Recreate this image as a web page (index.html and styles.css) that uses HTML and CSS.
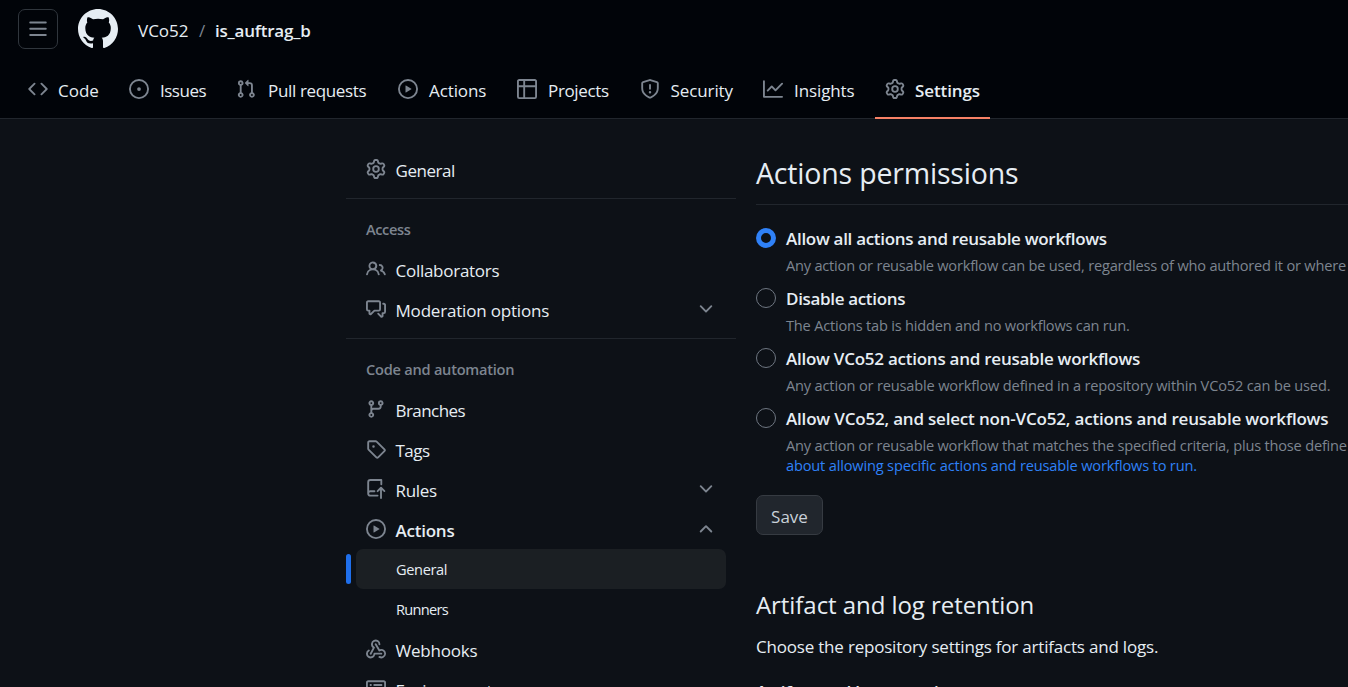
FILE: index.html
```html
<!DOCTYPE html>
<html lang="en">
<head>
<meta charset="utf-8">
<title>Actions settings</title>
<link rel="stylesheet" href="styles.css">
</head>
<body>
<svg class="sprite" aria-hidden="true">
  <symbol id="i-gear" viewBox="0 0 16 16"><path d="M8 0a8.2 8.2 0 0 1 .701.031C9.444.095 9.99.645 10.16 1.29l.288 1.107c.018.066.079.158.212.224.231.114.454.243.668.386.123.082.233.09.299.071l1.103-.303c.644-.176 1.392.021 1.82.63.27.385.506.792.704 1.218.315.675.111 1.422-.364 1.891l-.814.806c-.049.048-.098.147-.088.294.016.257.016.515 0 .772-.01.147.038.246.088.294l.814.806c.475.469.679 1.216.364 1.891a7.977 7.977 0 0 1-.704 1.217c-.428.61-1.176.807-1.82.63l-1.102-.302c-.067-.019-.177-.011-.3.071a5.909 5.909 0 0 1-.668.386c-.133.066-.194.158-.211.224l-.29 1.106c-.168.646-.715 1.196-1.458 1.26a8.006 8.006 0 0 1-1.402 0c-.743-.064-1.289-.614-1.458-1.26l-.289-1.106c-.018-.066-.079-.158-.212-.224a5.738 5.738 0 0 1-.668-.386c-.123-.082-.233-.09-.299-.071l-1.103.303c-.644.176-1.392-.021-1.82-.63a8.12 8.12 0 0 1-.704-1.218c-.315-.675-.111-1.422.363-1.891l.815-.806c.05-.048.098-.147.088-.294a6.214 6.214 0 0 1 0-.772c.01-.147-.038-.246-.088-.294l-.815-.806C.635 6.045.431 5.298.746 4.623a7.92 7.92 0 0 1 .704-1.217c.428-.61 1.176-.807 1.82-.63l1.102.302c.067.019.177.011.3-.071.214-.143.437-.272.668-.386.133-.066.194-.158.211-.224l.29-1.106C6.009.645 6.556.095 7.299.03 7.53.01 7.764 0 8 0Zm-.571 1.525c-.036.003-.108.036-.137.146l-.289 1.105c-.147.561-.549.967-.998 1.189-.173.086-.34.183-.5.29-.417.278-.97.423-1.529.27l-1.103-.303c-.109-.03-.175.016-.195.045-.22.312-.412.644-.573.99-.014.031-.021.11.059.19l.815.806c.411.406.562.957.53 1.456a4.709 4.709 0 0 0 0 .582c.032.499-.119 1.05-.53 1.456l-.815.806c-.081.08-.073.159-.059.19.162.346.353.677.573.989.02.03.085.076.195.046l1.102-.303c.56-.153 1.113-.008 1.53.27.161.107.328.204.501.29.447.222.85.629.997 1.189l.289 1.105c.029.109.101.143.137.146a6.6 6.6 0 0 0 1.142 0c.036-.003.108-.036.137-.146l.289-1.105c.147-.561.549-.967.998-1.189.173-.086.34-.183.5-.29.417-.278.97-.423 1.529-.27l1.103.303c.109.029.175-.016.195-.045.22-.313.411-.644.573-.99.014-.031.021-.11-.059-.19l-.815-.806c-.411-.406-.562-.957-.53-1.456a4.709 4.709 0 0 0 0-.582c-.032-.499.119-1.05.53-1.456l.815-.806c.081-.08.073-.159.059-.19a6.464 6.464 0 0 0-.573-.989c-.02-.03-.085-.076-.195-.046l-1.102.303c-.56.153-1.113.008-1.53-.27a4.44 4.44 0 0 0-.501-.29c-.447-.222-.85-.629-.997-1.189l-.289-1.105c-.029-.11-.101-.143-.137-.146a6.6 6.6 0 0 0-1.142 0ZM11 8a3 3 0 1 1-6 0 3 3 0 0 1 6 0ZM9.5 8a1.5 1.5 0 1 0-3.001.001A1.5 1.5 0 0 0 9.5 8Z"/></symbol>
  <symbol id="i-play" viewBox="0 0 16 16"><path d="M8 0a8 8 0 1 1 0 16A8 8 0 0 1 8 0ZM1.5 8a6.5 6.5 0 1 0 13 0 6.5 6.5 0 0 0-13 0Zm4.879-2.773 4.264 2.559a.25.25 0 0 1 0 .428l-4.264 2.559A.25.25 0 0 1 6 10.559V5.442a.25.25 0 0 1 .379-.215Z"/></symbol>
  <symbol id="i-down" viewBox="0 0 16 16"><path d="M12.78 5.22a.749.749 0 0 1 0 1.06l-4.25 4.25a.749.749 0 0 1-1.06 0L3.22 6.28a.749.749 0 1 1 1.06-1.06L8 8.939l3.72-3.719a.749.749 0 0 1 1.06 0Z"/></symbol>
  <symbol id="i-up" viewBox="0 0 16 16"><path d="M3.22 10.53a.749.749 0 0 1 0-1.06l4.25-4.25a.749.749 0 0 1 1.06 0l4.25 4.25a.749.749 0 1 1-1.06 1.06L8 6.811 4.28 10.53a.749.749 0 0 1-1.06 0Z"/></symbol>
</svg>

<header class="header">
  <div class="topbar">
    <button class="menu" aria-label="Menu"><svg class="icon" viewBox="0 0 16 16"><path d="M1 2.75A.75.75 0 0 1 1.75 2h12.5a.75.75 0 0 1 0 1.5H1.75A.75.75 0 0 1 1 2.75Zm0 5A.75.75 0 0 1 1.75 7h12.5a.75.75 0 0 1 0 1.5H1.75A.75.75 0 0 1 1 7.75ZM1.75 12h12.5a.75.75 0 0 1 0 1.5H1.75a.75.75 0 0 1 0-1.5Z"/></svg></button>
    <svg class="logo" viewBox="0 0 16 16"><path d="M8 0c4.42 0 8 3.58 8 8a8.013 8.013 0 0 1-5.45 7.59c-.4.08-.55-.17-.55-.38 0-.27.01-1.13.01-2.2 0-.75-.25-1.23-.54-1.48 1.78-.2 3.65-.88 3.65-3.95 0-.88-.31-1.59-.82-2.15.08-.2.36-1.02-.08-2.12 0 0-.67-.22-2.2.82-.64-.18-1.32-.27-2-.27-.68 0-1.36.09-2 .27-1.53-1.03-2.2-.82-2.2-.82-.44 1.1-.16 1.92-.08 2.12-.51.56-.82 1.28-.82 2.15 0 3.06 1.86 3.75 3.64 3.95-.23.2-.44.55-.51 1.07-.46.21-1.61.55-2.33-.66-.15-.24-.6-.83-1.23-.82-.67.01-.27.38.01.53.34.19.73.9.82 1.13.16.45.68 1.31 2.69.94 0 .67.01 1.3.01 1.49 0 .21-.15.45-.55.38A7.995 7.995 0 0 1 0 8c0-4.42 3.58-8 8-8Z"/></svg>
    <nav class="crumbs"><span class="t owner">VCo52</span><span class="t slash">/</span><span class="t repo">is_auftrag_b</span></nav>
  </div>
  <nav class="tabs">
    <a class="tab tab-code"><svg class="icon" viewBox="0 0 16 16"><path d="m11.28 3.22 4.25 4.25a.75.75 0 0 1 0 1.06l-4.25 4.25a.749.749 0 1 1-1.06-1.06L13.94 8l-3.72-3.72a.749.749 0 1 1 1.06-1.06Zm-6.56 0a.751.751 0 0 1 1.06 1.06L2.06 8l3.72 3.72a.749.749 0 1 1-1.06 1.06L.47 8.53a.75.75 0 0 1 0-1.06Z"/></svg><span class="t">Code</span></a>
    <a class="tab tab-issues"><svg class="icon" viewBox="0 0 16 16"><path d="M8 9.5a1.5 1.5 0 1 0 0-3 1.5 1.5 0 0 0 0 3Z"/><path d="M8 0a8 8 0 1 1 0 16A8 8 0 0 1 8 0ZM1.5 8a6.5 6.5 0 1 0 13 0 6.5 6.5 0 0 0-13 0Z"/></svg><span class="t">Issues</span></a>
    <a class="tab tab-pulls"><svg class="icon" viewBox="0 0 16 16"><path d="M1.5 3.25a2.25 2.25 0 1 1 3 2.122v5.256a2.251 2.251 0 1 1-1.5 0V5.372A2.25 2.25 0 0 1 1.5 3.25Zm5.677-.177L9.573.677A.25.25 0 0 1 10 .854V2.5h1A2.5 2.5 0 0 1 13.5 5v5.628a2.251 2.251 0 1 1-1.5 0V5a1 1 0 0 0-1-1h-1v1.646a.25.25 0 0 1-.427.177L7.177 3.427a.25.25 0 0 1 0-.354ZM3.75 2.5a.75.75 0 1 0 0 1.5.75.75 0 0 0 0-1.5Zm0 9.5a.75.75 0 1 0 0 1.5.75.75 0 0 0 0-1.5Zm8.25.75a.75.75 0 1 0 1.5 0 .75.75 0 0 0-1.5 0Z"/></svg><span class="t">Pull requests</span></a>
    <a class="tab tab-actions"><svg class="icon"><use href="#i-play"/></svg><span class="t">Actions</span></a>
    <a class="tab tab-projects"><svg class="icon" viewBox="0 0 16 16"><path d="M0 1.75C0 .784.784 0 1.75 0h12.5C15.216 0 16 .784 16 1.75v12.5A1.75 1.75 0 0 1 14.25 16H1.75A1.75 1.75 0 0 1 0 14.25ZM6.5 6.5v8h7.75a.25.25 0 0 0 .25-.25V6.5Zm8-1.5V1.75a.25.25 0 0 0-.25-.25H6.5V5Zm-13 1.5v7.75c0 .138.112.25.25.25H5v-8ZM5 5V1.5H1.75a.25.25 0 0 0-.25.25V5Z"/></svg><span class="t">Projects</span></a>
    <a class="tab tab-security"><svg class="icon" viewBox="0 0 16 16"><path d="M7.467.133a1.748 1.748 0 0 1 1.066 0l5.25 1.68A1.75 1.75 0 0 1 15 3.48V7c0 1.566-.32 3.182-1.303 4.682-.983 1.498-2.585 2.813-5.032 3.855a1.697 1.697 0 0 1-1.33 0c-2.447-1.042-4.049-2.357-5.032-3.855C1.32 10.182 1 8.566 1 7V3.48a1.75 1.75 0 0 1 1.217-1.667Zm.61 1.429a.25.25 0 0 0-.153 0l-5.25 1.68a.25.25 0 0 0-.174.238V7c0 1.358.275 2.666 1.057 3.86.784 1.194 2.121 2.34 4.366 3.297a.196.196 0 0 0 .154 0c2.245-.956 3.582-2.104 4.366-3.298C13.225 9.666 13.5 8.36 13.5 7V3.48a.251.251 0 0 0-.174-.237l-5.25-1.68ZM8.75 4.75v3a.75.75 0 0 1-1.5 0v-3a.75.75 0 0 1 1.5 0ZM9 10.5a1 1 0 1 1-2 0 1 1 0 0 1 2 0Z"/></svg><span class="t">Security</span></a>
    <a class="tab tab-insights"><svg class="icon" viewBox="0 0 16 16"><path d="M1.5 1.75V13.5h13.75a.75.75 0 0 1 0 1.5H.75a.75.75 0 0 1-.75-.75V1.75a.75.75 0 0 1 1.5 0Zm14.28 2.53-5.25 5.25a.75.75 0 0 1-1.06 0L7 7.06 4.28 9.78a.751.751 0 0 1-1.06-1.06l3.25-3.25a.75.75 0 0 1 1.06 0L10 7.94l4.72-4.72a.751.751 0 1 1 1.06 1.06Z"/></svg><span class="t">Insights</span></a>
    <a class="tab tab-settings selected"><svg class="icon"><use href="#i-gear"/></svg><span class="t">Settings</span></a>
  </nav>
</header>

<div class="layout">
  <aside class="side">
    <a class="item s-general"><svg class="icon"><use href="#i-gear"/></svg><span class="t">General</span></a>
    <hr class="rule">
    <h3 class="group s-access"><span class="t">Access</span></h3>
    <a class="item s-collab"><svg class="icon" viewBox="0 0 16 16"><path d="M2 5.5a3.5 3.5 0 1 1 5.898 2.549 5.508 5.508 0 0 1 3.034 4.084.75.75 0 1 1-1.482.235 4 4 0 0 0-7.9 0 .75.75 0 0 1-1.482-.236A5.507 5.507 0 0 1 3.102 8.05 3.493 3.493 0 0 1 2 5.5ZM11 4a3.001 3.001 0 0 1 2.22 5.018 5.01 5.01 0 0 1 2.56 3.012.749.749 0 0 1-.885.954.752.752 0 0 1-.549-.514 3.507 3.507 0 0 0-2.522-2.372.75.75 0 0 1-.574-.73v-.352a.75.75 0 0 1 .416-.672A1.5 1.5 0 0 0 11 5.5.75.75 0 0 1 11 4Zm-5.5-.5a2 2 0 1 0-.001 3.999A2 2 0 0 0 5.5 3.5Z"/></svg><span class="t">Collaborators</span></a>
    <a class="item s-mod"><svg class="icon" viewBox="0 0 16 16"><path d="M1.75 1h8.5c.966 0 1.75.784 1.75 1.75v5.5A1.75 1.75 0 0 1 10.25 10H7.061l-2.574 2.573A1.458 1.458 0 0 1 2 11.543V10h-.25A1.75 1.75 0 0 1 0 8.25v-5.5C0 1.784.784 1 1.75 1ZM1.5 2.75v5.5c0 .138.112.25.25.25h1a.75.75 0 0 1 .75.75v2.19l2.72-2.72a.749.749 0 0 1 .53-.22h3.5a.25.25 0 0 0 .25-.25v-5.5a.25.25 0 0 0-.25-.25h-8.5a.25.25 0 0 0-.25.25Zm13 2a.25.25 0 0 0-.25-.25h-.5a.75.75 0 0 1 0-1.5h.5c.966 0 1.75.784 1.75 1.75v5.5A1.75 1.75 0 0 1 14.25 12H14v1.543a1.458 1.458 0 0 1-2.487 1.03L9.22 12.28a.749.749 0 1 1 1.06-1.06l2.22 2.22v-2.19a.75.75 0 0 1 .75-.75h1a.25.25 0 0 0 .25-.25Z"/></svg><span class="t">Moderation options</span><svg class="icon chev"><use href="#i-down"/></svg></a>
    <hr class="rule">
    <h3 class="group s-code"><span class="t">Code and automation</span></h3>
    <a class="item s-branches"><svg class="icon" viewBox="0 0 16 16"><path d="M9.5 3.25a2.25 2.25 0 1 1 3 2.122V6A2.5 2.5 0 0 1 10 8.5H6a1 1 0 0 0-1 1v1.128a2.251 2.251 0 1 1-1.5 0V5.372a2.25 2.25 0 1 1 1.5 0v1.836A2.493 2.493 0 0 1 6 7h4a1 1 0 0 0 1-1v-.628A2.25 2.25 0 0 1 9.5 3.25Zm-6 0a.75.75 0 1 0 1.5 0 .75.75 0 0 0-1.5 0Zm8.25-.75a.75.75 0 1 0 0 1.5.75.75 0 0 0 0-1.5ZM4.25 12a.75.75 0 1 0 0 1.5.75.75 0 0 0 0-1.5Z"/></svg><span class="t">Branches</span></a>
    <a class="item s-tags"><svg class="icon" viewBox="0 0 16 16"><path d="M1 7.775V2.75C1 1.784 1.784 1 2.75 1h5.025c.464 0 .91.184 1.238.513l6.25 6.25a1.75 1.75 0 0 1 0 2.474l-5.026 5.026a1.75 1.75 0 0 1-2.474 0l-6.25-6.25A1.752 1.752 0 0 1 1 7.775Zm1.5 0c0 .066.026.13.073.177l6.25 6.25a.25.25 0 0 0 .354 0l5.025-5.025a.25.25 0 0 0 0-.354l-6.25-6.25a.25.25 0 0 0-.177-.073H2.75a.25.25 0 0 0-.25.25ZM6 5a1 1 0 1 1 0 2 1 1 0 0 1 0-2Z"/></svg><span class="t">Tags</span></a>
    <a class="item s-rules"><svg class="icon" viewBox="0 0 16 16"><path d="M1 2.5A2.5 2.5 0 0 1 3.5 0h8.75a.75.75 0 0 1 .75.75v3.5a.75.75 0 0 1-1.5 0V1.5h-8a1 1 0 0 0-1 1v6.708A2.493 2.493 0 0 1 3.5 9h3.25a.75.75 0 0 1 0 1.5H3.5a1 1 0 0 0 0 2h5.75a.75.75 0 0 1 0 1.5H3.5A2.5 2.5 0 0 1 1 11.5Zm13.23 7.79-1.48-1.48v6.44a.75.75 0 0 1-1.5 0V8.81L9.78 10.29a.751.751 0 0 1-1.06-1.06l2.75-2.75a.749.749 0 0 1 1.06 0l2.75 2.75a.749.749 0 0 1-1.05 1.06Z"/></svg><span class="t">Rules</span><svg class="icon chev"><use href="#i-down"/></svg></a>
    <a class="item s-actions open"><svg class="icon"><use href="#i-play"/></svg><span class="t">Actions</span><svg class="icon chev"><use href="#i-up"/></svg></a>
    <div class="sub">
      <a class="subitem s-subgen current"><span class="t">General</span></a>
      <a class="subitem s-run"><span class="t">Runners</span></a>
    </div>
    <a class="item s-web"><svg class="icon" viewBox="0 0 16 16"><path d="M5.5 4.25a2.25 2.25 0 0 1 4.5 0 .75.75 0 0 0 1.5 0 3.75 3.75 0 1 0-6.14 2.889l-2.272 4.258a.75.75 0 0 0 1.324.706L7 7.25a.75.75 0 0 0-.309-1.015A2.25 2.25 0 0 1 5.5 4.25Z"/><path d="M7.364 3.607a.75.75 0 0 1 1.03.257l2.608 4.349a3.75 3.75 0 1 1-.628 6.785.75.75 0 0 1 .752-1.299 2.25 2.25 0 1 0-.033-3.88.75.75 0 0 1-1.03-.256L7.107 4.636a.75.75 0 0 1 .257-1.03Z"/><path d="M2.9 8.776A.75.75 0 0 1 2.625 9.8 2.25 2.25 0 1 0 6 11.75a.75.75 0 0 1 .75-.751h5.5a.75.75 0 0 1 0 1.5H7.425a3.751 3.751 0 1 1-5.55-3.998.75.75 0 0 1 1.024.274Z"/></svg><span class="t">Webhooks</span></a>
    <a class="item s-env"><svg class="icon" viewBox="0 0 16 16"><path d="M1.75 1h12.5c.966 0 1.75.784 1.75 1.75v10.5A1.75 1.75 0 0 1 14.25 15H1.75A1.75 1.75 0 0 1 0 13.25V2.75C0 1.784.784 1 1.75 1Zm0 1.5a.25.25 0 0 0-.25.25v10.5c0 .138.112.25.25.25h12.5a.25.25 0 0 0 .25-.25V2.75a.25.25 0 0 0-.25-.25ZM3 4h1.5v1.5H3Zm3 0h7v1.5H6ZM3 7h1.5v1.5H3Zm3 0h7v1.5H6Z"/></svg><span class="t">Environments</span></a>
  </aside>

  <main class="main">
    <h2 class="title"><span class="t">Actions permissions</span></h2>
    <label class="option o1"><i class="radio on"></i><b class="t">Allow all actions and reusable workflows</b><span class="note"><span class="t">Any action or reusable workflow can be used, regardless of who authored it or where</span></span></label>
    <label class="option o2"><i class="radio"></i><b class="t">Disable actions</b><span class="note"><span class="t">The Actions tab is hidden and no workflows can run.</span></span></label>
    <label class="option o3"><i class="radio"></i><b class="t">Allow VCo52 actions and reusable workflows</b><span class="note"><span class="t">Any action or reusable workflow defined in a repository within VCo52 can be used.</span></span></label>
    <label class="option o4"><i class="radio"></i><b class="t">Allow VCo52, and select non-VCo52, actions and reusable workflows</b><span class="note"><span class="t">Any action or reusable workflow that matches the specified criteria, plus those define</span><br><a class="t link">about allowing specific actions and reusable workflows to run.</a></span></label>
    <button class="save"><span class="t">Save</span></button>
    <h2 class="subtitle"><span class="t">Artifact and log retention</span></h2>
    <p class="lead"><span class="t">Choose the repository settings for artifacts and logs.</span></p>
    <h4 class="field"><span class="t">Artifact and log retention</span></h4>
  </main>
</div>
</body>
</html>
```
FILE: styles.css
```css
* { box-sizing: border-box; }
html, body { overflow: hidden; }
body { margin: 0; height: 687px; background: #0d1117; color: #e6edf3; font: 17px/26px "Open Sans", "Noto Sans", sans-serif; white-space: nowrap; }
.sprite { position: absolute; width: 0; height: 0; }
.icon { width: 20px; height: 20px; flex: none; fill: #7d8590; }
.t { display: inline-block; }

.header { height: 119px; background: #010409; border-bottom: 1px solid #21262d; }
.topbar { display: flex; align-items: center; height: 58px; padding-left: 18px; }
.menu { display: grid; place-items: center; width: 40px; height: 40px; padding: 0; border: 1px solid #30363d; border-radius: 7px; background: none; }
.logo { width: 40px; height: 40px; margin: 0 20px; fill: #e6edf3; }
.crumbs { display: flex; padding-top: 3px; }
.owner { width: 51px; }
.slash { width: 26px; text-align: center; color: #7d8590; }
.repo { font-weight: 600; letter-spacing: -.22px; }
.tabs { display: flex; gap: 10px; height: 60px; padding-left: 18px; }
.tab { display: flex; height: 61px; padding: 21px 10px 0; gap: 10px; }
.tab .t { line-height: 24px; }
.tab-code .t { width: 41px; }
.tab-issues .t { width: 47px; padding-left: 1px; letter-spacing: -.5px; }
.tab-pulls .t { width: 102px; padding-left: 2px; letter-spacing: -.35px; }
.tab-actions .t { width: 59px; padding-left: 1px; letter-spacing: -.1px; }
.tab-projects .t { width: 62.5px; padding-left: 1px; letter-spacing: -.35px; }
.tab-security .t { width: 63.5px; padding-left: 1px; letter-spacing: -.1px; }
.tab-insights .t { width: 62px; padding-left: 1px; letter-spacing: -.1px; }
.tab-settings .t { width: 65px; letter-spacing: -.1px; }
.selected { border-bottom: 2px solid #f78166; font-weight: 600; }

.layout { display: flex; }
.side { width: 390px; margin-left: 346px; padding-top: 30px; flex: none; }
.item { display: flex; align-items: center; gap: 9.5px; height: 40px; padding: 0 20px; }
.item .t { padding-top: 4px; }
.chev { margin-left: auto; }
.rule { height: 1px; margin: 9px 0; border: 0; background: #21262d; }
.group { height: 41px; margin: 0; padding-left: 20px; font: 600 14.6px/43px "Open Sans", sans-serif; color: #7d8590; }
.open { font-weight: 600; }
.sub { padding: 0 10px; font-size: 14.6px; }
.subitem { display: flex; align-items: center; position: relative; height: 40px; padding-left: 40px; border-radius: 7px; }
.current { background: #1b1f23; }
.current::before { content: ""; position: absolute; left: -10px; top: 5px; width: 5px; height: 30px; border-radius: 4px; background: #1f6feb; }
.s-general { letter-spacing: -.45px; }
.s-access { letter-spacing: -.4px; }
.s-collab { letter-spacing: -.27px; }
.s-mod { letter-spacing: -.19px; }
.s-code { letter-spacing: -.24px; }
.s-branches { letter-spacing: -.55px; }
.s-tags { letter-spacing: -.55px; }
.s-rules { letter-spacing: -.3px; }
.s-actions { letter-spacing: -.23px; }
.s-subgen { letter-spacing: -.36px; }
.s-run { letter-spacing: -.7px; }
.s-web { letter-spacing: -.2px; }
.s-env { letter-spacing: -.5px; }

.main { margin-left: 20px; padding-top: 30px; flex: 1; min-width: 0; }
.title { height: 56px; margin: 0 0 19px; border-bottom: 1px solid #21262d; font-size: 28.5px; font-weight: 400; line-height: 49px; letter-spacing: -.18px; }
.option { display: grid; grid-template-columns: 20px 1fr; column-gap: 10px; min-height: 60px; }
.option b { font-weight: 600; line-height: 30px; }
.radio { width: 20px; height: 20px; margin-top: 4px; border: 1px solid #6e7681; border-radius: 50%; }
.on { border: 5px solid #2f81f7; }
.note { grid-column: 2; height: 30px; padding-top: 1px; font-size: 14.6px; line-height: 20px; color: #7d8590; }
.o1 b { letter-spacing: -.3px; }
.o1 .note { letter-spacing: -.21px; }
.o2 b { letter-spacing: -.33px; }
.o2 .note { letter-spacing: -.21px; }
.o3 b { letter-spacing: -.25px; }
.o3 .note { letter-spacing: -.17px; }
.o4 b { letter-spacing: -.19px; }
.o4 .note { letter-spacing: -.2px; }
.note .link { letter-spacing: -.17px; color: #2f81f7; }
.save { width: 67px; height: 40px; margin-top: 31px; padding: 2px 0 0; border: 1px solid #363b42; border-radius: 7px; background: #21262d; color: #c9d1d9; font: 17px "Open Sans", sans-serif; }
.subtitle { height: 40px; margin: 50px 0 0; font-size: 24px; font-weight: 400; line-height: 40px; letter-spacing: -.06px; }
.lead { margin: 9px 0 0; letter-spacing: -.2px; }
.field { margin: 19px 0 0; font-size: 17px; font-weight: 600; letter-spacing: -.15px; }
```
